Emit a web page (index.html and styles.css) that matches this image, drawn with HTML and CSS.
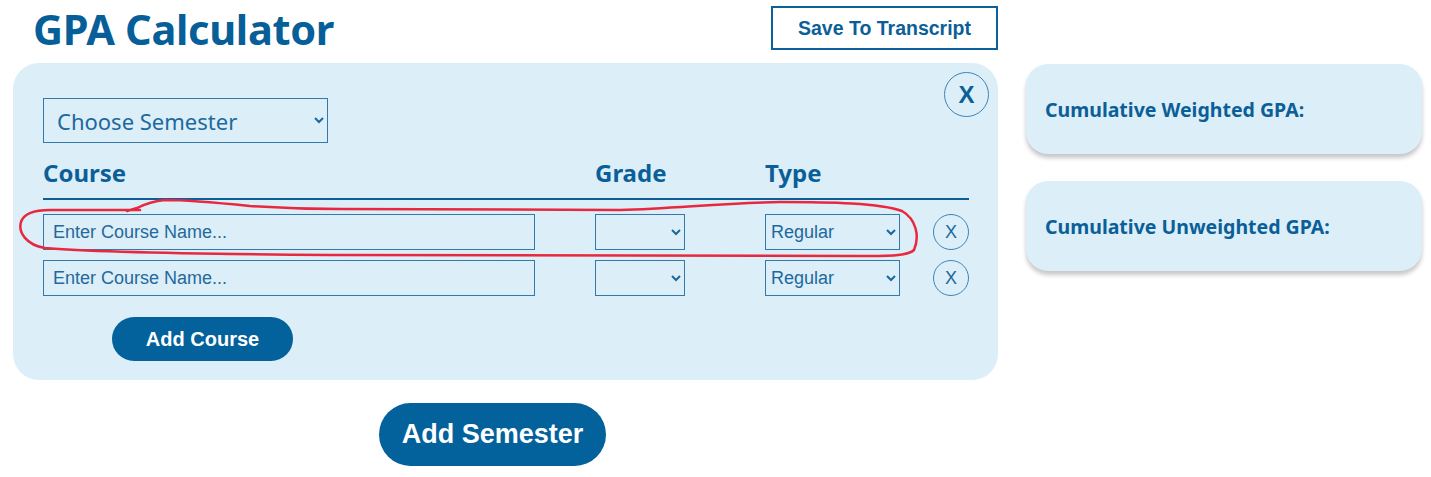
FILE: index.html
```html
<!DOCTYPE html>
<html lang="en">
<head>
<meta charset="utf-8">
<title>GPA Calculator</title>
<link rel="stylesheet" href="styles.css">
</head>
<body>
<div class="page">
  <div class="main">
    <div class="topbar">
      <h1 class="title">GPA Calculator</h1>
      <button class="btn-outline">Save To Transcript</button>
    </div>
    <div class="card">
      <button class="close-big">X</button>
      <select class="semester-select">
        <option>Choose Semester</option>
      </select>
      <div class="grid head">
        <div class="col-h">Course</div>
        <div class="col-h">Grade</div>
        <div class="col-h">Type</div>
        <div></div>
      </div>
      <div class="grid row">
        <input class="course-input" type="text" placeholder="Enter Course Name...">
        <select class="grade-select"><option></option></select>
        <select class="type-select"><option>Regular</option></select>
        <button class="close-small">X</button>
      </div>
      <div class="grid row">
        <input class="course-input" type="text" placeholder="Enter Course Name...">
        <select class="grade-select"><option></option></select>
        <select class="type-select"><option>Regular</option></select>
        <button class="close-small">X</button>
      </div>
      <button class="btn-pill btn-add-course">Add Course</button>
    </div>
    <button class="btn-pill btn-add-semester">Add Semester</button>
  </div>
  <div class="side">
    <div class="gpa-card">Cumulative Weighted GPA:</div>
    <div class="gpa-card">Cumulative Unweighted GPA:</div>
  </div>
</div>
<svg class="annotation" width="1431" height="477" viewBox="0 0 1431 477" aria-hidden="true">
  <path d="M127 211 L137 208 C145 204 155 201 165 200 C190 200 220 203 250 206 C280 208 310 209 340 209 L620 210 C680 208 720 203 780 202 C830 202 880 203 902 211 C916 219 920 236 914 250 C908 256 890 256 860 256 L330 255 C200 254 90 252 45 248 C26 245 18 232 21 222 C24 213 34 210 50 210 L140 210" fill="none" stroke="#e8283f" stroke-width="2.5" stroke-linecap="round" stroke-linejoin="round"/>
</svg>
</body>
</html>
```
FILE: styles.css
```css
* { box-sizing: border-box; }

body {
  margin: 0;
  background: #ffffff;
  font-family: "Noto Sans", "Open Sans", sans-serif;
  color: #075f98;
  position: relative;
  width: 1431px;
  height: 477px;
  overflow: hidden;
}

.page {
  display: flex;
  align-items: flex-start;
  gap: 28px;
  padding: 6px 0 0 13px;
}

.main {
  width: 985px;
  display: flex;
  flex-direction: column;
  align-items: flex-start;
}

.topbar {
  width: 100%;
  height: 57px;
  display: flex;
  justify-content: space-between;
  align-items: flex-start;
  padding-left: 20px;
}

.title {
  margin: 0;
  font-size: 41.5px;
  line-height: 44px;
  font-weight: 700;
  letter-spacing: -0.3px;
  color: #065f98;
  padding-top: 1px;
}

.btn-outline {
  width: 227px;
  height: 44px;
  border: 2px solid #0b619b;
  background: #ffffff;
  color: #0b5f98;
  font-family: "Liberation Sans", Arial, sans-serif;
  font-weight: 700;
  font-size: 19.5px;
  padding: 0;
  margin-top: 0;
}

.card {
  position: relative;
  width: 985px;
  background: #dceef7;
  border-radius: 26px;
  padding: 35px 29px 19px 30px;
}

.close-big {
  position: absolute;
  top: 9px;
  right: 9px;
  width: 45px;
  height: 45px;
  border-radius: 50%;
  border: 1px solid #3f84b6;
  background: transparent;
  color: #0b5f98;
  font-family: "Liberation Sans", Arial, sans-serif;
  font-weight: 700;
  font-size: 24px;
  padding: 0;
  line-height: 1;
}

.semester-select {
  display: block;
  width: 285px;
  height: 45px;
  border: 1px solid #3379ab;
  border-radius: 0;
  background: transparent;
  color: #1b699e;
  font-family: "Noto Sans", "Open Sans", sans-serif;
  font-size: 22px;
  padding: 0 8px 0 9px;
}

.grid {
  display: grid;
  grid-template-columns: 552px 170px 168px 36px;
  align-items: center;
}

.head {
  margin-top: 15px;
  padding-bottom: 10px;
  border-bottom: 2px solid #0b5f98;
}

.col-h {
  font-size: 24px;
  font-weight: 700;
  line-height: 30px;
  color: #0b5f98;
}

.row {
  height: 36px;
  margin-top: 14px;
}

.row + .row {
  margin-top: 10px;
}

.course-input {
  width: 492px;
  height: 36px;
  border: 1px solid #3379ab;
  border-radius: 0;
  background: transparent;
  font-family: "Liberation Sans", Arial, sans-serif;
  font-size: 18px;
  color: #1b699e;
  padding: 0 9px;
}

.course-input::placeholder {
  color: #23699c;
  opacity: 1;
}

.grade-select,
.type-select {
  height: 36px;
  border: 1px solid #3379ab;
  border-radius: 0;
  background: transparent;
  font-family: "Liberation Sans", Arial, sans-serif;
  font-size: 18px;
  color: #1b699e;
  padding: 0 1px;
}

.grade-select { width: 90px; }
.type-select { width: 135px; }

.close-small {
  width: 36px;
  height: 36px;
  border-radius: 50%;
  border: 1px solid #3f84b6;
  background: transparent;
  color: #1b699e;
  font-family: "Liberation Sans", Arial, sans-serif;
  font-size: 18px;
  padding: 0;
  line-height: 1;
}

.btn-pill {
  border: none;
  border-radius: 999px;
  background: #03619b;
  color: #ffffff;
  font-family: "Liberation Sans", Arial, sans-serif;
  font-weight: 700;
  padding: 0;
}

.btn-add-course {
  display: block;
  margin: 21px 0 0 69px;
  width: 181px;
  height: 44px;
  font-size: 20px;
}

.btn-add-semester {
  margin: 23px 0 0 366px;
  width: 227px;
  height: 63px;
  font-size: 27px;
}

.side {
  width: 396px;
  padding-top: 58px;
  display: flex;
  flex-direction: column;
  gap: 27px;
}

.gpa-card {
  height: 90px;
  background: #dceef7;
  border-radius: 22px;
  box-shadow: 0 4px 4px rgba(0, 0, 0, 0.22);
  display: flex;
  align-items: center;
  padding-left: 19px;
  font-size: 19.5px;
  font-weight: 700;
  color: #0b5f98;
}

.annotation {
  position: absolute;
  top: 0;
  left: 0;
  pointer-events: none;
}
```
